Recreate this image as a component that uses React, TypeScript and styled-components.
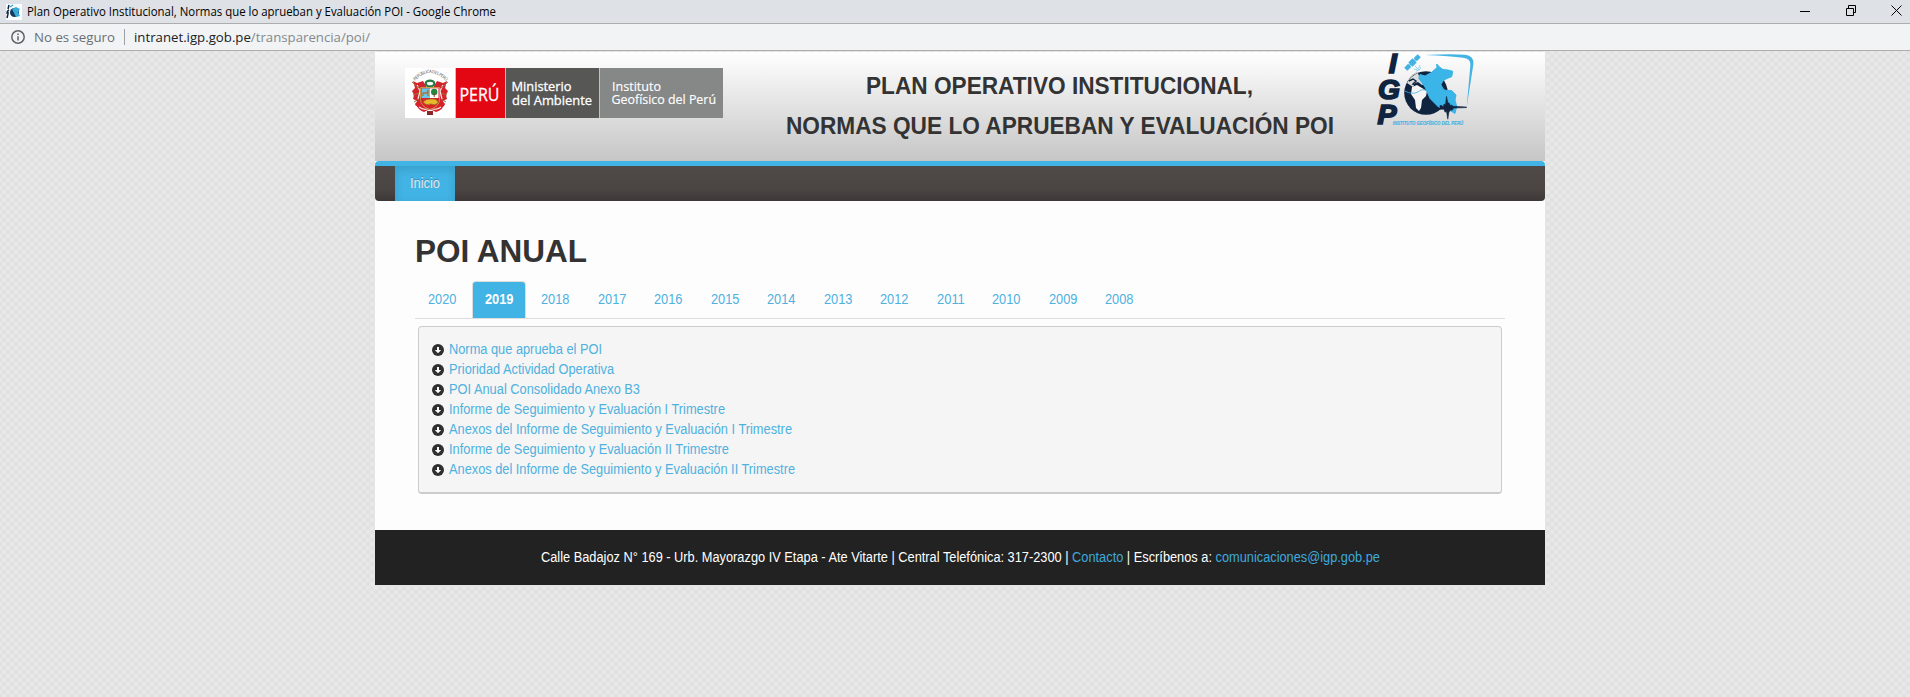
import React from 'react';
import styled, { createGlobalStyle } from 'styled-components';

const Global = createGlobalStyle`
  * { box-sizing: border-box; }
  body {
    margin: 0;
    min-height: 100vh;
    font: 14px/20px "Liberation Sans", Arial, sans-serif;
    color: #333;
    background-color: #e8e8e8;
    background-image:
      linear-gradient(45deg, rgba(0,0,0,.018) 0 8%, transparent 8% 42%, rgba(0,0,0,.018) 42% 58%, transparent 58% 92%, rgba(0,0,0,.018) 92%),
      linear-gradient(-45deg, rgba(0,0,0,.018) 0 8%, transparent 8% 42%, rgba(0,0,0,.018) 42% 58%, transparent 58% 92%, rgba(0,0,0,.018) 92%);
    background-size: 8px 8px;
  }
`;

const TitleBar = styled.div`
  height: 24px;
  display: flex;
  align-items: center;
  background: #dee1e6;
  border-bottom: 1px solid #adadae;
  padding: 0 8px 0 6px;
  font: 12px/16px "Open Sans", sans-serif;
  color: #000;
`;
const Favicon = styled.svg`
  width: 16px;
  height: 16px;
  margin-right: 5px;
`;
const WindowTitle = styled.span`
  flex: 1;
`;
const Controls = styled.div`
  display: flex;
  gap: 35px;
  padding-bottom: 3px;
  svg { display: block; width: 11px; height: 11px; fill: none; stroke: #000; }
`;
const AddressBar = styled.div`
  height: 27px;
  display: flex;
  align-items: center;
  background: #f1f3f4;
  border-bottom: 1px solid #adadae;
  padding-left: 11px;
  font: 13.5px/18px "Open Sans", sans-serif;
`;
const Security = styled.div`
  display: flex;
  width: 114px;
  height: 16px;
  align-items: center;
  border-right: 1px solid #9aa0a6;
  gap: 9px;
`;
const Url = styled.div`
  padding-left: 9px;
`;
const Container = styled.div`
  width: 1170px;
  margin: 1px 0 0 375px;
  background: #fefdfe;
`;
const Header = styled.header`
  height: 109px;
  display: flex;
  align-items: flex-start;
  background: linear-gradient(#fff, #c6c6c6);
`;
const Ministry = styled.div`
  display: flex;
  width: 318px;
  height: 50px;
  margin: 16px 0 0 30px;
  background: #fff;
`;
const Emblem = styled.svg`
  width: 50px;
  height: 50px;
`;
const Plate = styled.div<{ $w: number; $bg: string }>`
  width: ${p => p.$w}px;
  background: ${p => p.$bg};
  border-left: 1px solid #c9c3b5;
  svg { display: block; overflow: visible; }
`;
const Heading = styled.h1`
  flex: 1;
  display: flex;
  flex-direction: column;
  align-items: center;
  margin: 14px 0 0 20px;
  font-size: 24px;
  line-height: 40px;
  color: #333;
`;
const InstituteLogo = styled.svg`
  width: 100px;
  height: 78px;
  margin-right: 69px;
  overflow: visible;
`;
const Nav = styled.nav`
  height: 40px;
  display: flex;
  padding-left: 20px;
  border-top: 5px solid #41b3e4;
  border-radius: 4px;
  background: linear-gradient(#4f4a48, #4b4644 65%, #3d3837);
`;
const NavItem = styled.a`
  display: flex;
  justify-content: center;
  width: 60px;
  height: 35px;
  padding-top: 8px;
  color: #e5e8ee;
  background: #41b3e4;
  box-shadow: inset 0 3px 8px rgba(0,0,0,.125);
  text-shadow: 0 -1px 0 rgba(0,0,0,.25);
`;
const Main = styled.main`
  height: 329px;
  padding: 30px 40px 0;
`;
const PageTitle = styled.h2`
  margin: 0 0 10px;
  font-size: 31.5px;
  line-height: 40px;
`;
const Tabs = styled.div`
  display: flex;
  height: 38px;
  gap: 2px;
  border-bottom: 1px solid #ddd;
`;
const Tab = styled.a<{ $active?: boolean }>`
  height: 37px;
  padding: 8px 12px;
  border: 1px solid ${p => (p.$active ? '#ddd' : 'transparent')};
  border-bottom: 0;
  border-radius: 4px 4px 0 0;
  background: ${p => (p.$active ? '#41b3e4' : 'transparent')};
  color: ${p => (p.$active ? '#fff' : '#4eb1df')};
  font-weight: ${p => (p.$active ? 700 : 400)};
`;
const Well = styled.ul`
  margin: 7px 3px 0;
  padding: 12px 13px 15px;
  height: 168px;
  list-style: none;
  background: #f5f5f5;
  border: 1px solid #ccc;
  border-bottom-width: 2px;
  border-radius: 4px;
`;
const Item = styled.li`
  display: flex;
  align-items: center;
  gap: 5px;
  height: 20px;
  color: #4eb1df;
`;
const ItemIcon = styled.svg`
  display: block;
  margin-top: 2px;
`;
const Footer = styled.footer`
  height: 55px;
  background: #222;
  color: #fff;
  padding-left: 166px;
`;
const Line = styled.svg`
  display: block;
  overflow: visible;
`;

const HUMANIST = '"Open Sans", sans-serif';
const SANS = '"Liberation Sans", Arial, sans-serif';

type LineProps = { w: number; h: number; y: number; children: React.ReactNode };
const FittedLine = ({ w, h, y, children }: LineProps) => (
  <Line width={w} height={h}>
    <text y={y} textLength={w} lengthAdjust="spacingAndGlyphs" fill="currentColor">{children}</text>
  </Line>
);

const years = [2020, 2019, 2018, 2017, 2016, 2015, 2014, 2013, 2012, 2011, 2010, 2009, 2008];
const documents: [string, number][] = [
  ['Norma que aprueba el POI', 153],
  ['Prioridad Actividad Operativa', 165],
  ['POI Anual Consolidado Anexo B3', 191],
  ['Informe de Seguimiento y Evaluación I Trimestre', 276],
  ['Anexos del Informe de Seguimiento y Evaluación I Trimestre', 343],
  ['Informe de Seguimiento y Evaluación II Trimestre', 280],
  ['Anexos del Informe de Seguimiento y Evaluación II Trimestre', 346],
];

const DownloadIcon = () => (
  <ItemIcon width="12" height="12" viewBox="0 0 12 12">
    <circle cx="6" cy="6" r="6" fill="#2f2f2f" />
    <path d="M5 3h2v3h2.2L6 9.3 2.8 6H5z" fill="#fff" />
  </ItemIcon>
);

const CoatOfArms = () => (
  <Emblem viewBox="0 0 50 50">
    <path id="motto" d="M10 13Q25 -3 41 13" fill="none" />
    <text fontSize="4.4" fontFamily={HUMANIST} fill="#555"><textPath href="#motto" textLength="36">REPÚBLICA DEL PERÚ</textPath></text>
    <path d="M8 13l4 2 6-2 3 5v20l-4 3-7-4 2-4-4-2 1-4-2-4 3-3z" fill="#d4232c" />
    <path d="M42 13l-4 2-6-2-3 5v20l4 3 7-4-2-4 4-2-1-4 2-4-3-3z" fill="#d4232c" />
    <path d="M12 17l3 6-2 8M38 17l-3 6 2 8" stroke="#f7dedb" strokeWidth="1.3" fill="none" />
    <path d="M7 14l7 6M43 14l-7 6M8 27l6-2M42 27l-6-2M9 34l5-3M41 34l-5-3" stroke="#94733c" strokeWidth="1" />
    <path d="M10 35q3 7 9 9l6-3 6 3q7-2 9-9l-7 3H17z" fill="#d4232c" />
    <path d="M14 39q5 4 11 1 6 3 11-1" stroke="#f4dada" strokeWidth="1.2" fill="none" />
    <path d="M22 43h6v4h-6z" fill="#8c2524" />
    <ellipse cx="25" cy="15.5" rx="4.3" ry="2.9" fill="#fff" stroke="#267a42" strokeWidth="2.2" />
    <path d="M15.5 19.5h19v12q0 7-9.5 10-9.5-3-9.5-10z" fill="#d8232a" stroke="#c9a04a" strokeWidth=".9" />
    <path d="M16.5 20.3H25V30h-8.5z" fill="#6cc5e6" />
    <path d="M25 20.3h8.5V30H25z" fill="#fff" />
    <path d="M18 28v-3h4l1-3v6" stroke="#a7773e" strokeWidth="1.3" fill="none" />
    <circle cx="29.2" cy="24" r="3.2" fill="#258542" />
    <path d="M29.2 25v4" stroke="#765029" />
    <path d="M18 34q3-3.5 9-3 6 0 6 4-3 3-7 1-5 2-8-2z" fill="#e8b92d" stroke="#8d671b" strokeWidth=".6" />
  </Emblem>
);

const IgpLogo = () => (
  <InstituteLogo viewBox="0 0 100 78">
    <g fill="#10233f" stroke="#10233f" strokeWidth="1.7" fontFamily={SANS} fontWeight="700" fontStyle="italic" fontSize="28">
      <text x="12.8" y="21.2" textLength="8" lengthAdjust="spacingAndGlyphs">I</text>
      <text x="2" y="46.7" textLength="22" lengthAdjust="spacingAndGlyphs">G</text>
      <text x="1.5" y="72" textLength="19" lengthAdjust="spacingAndGlyphs">P</text>
    </g>
    <circle cx="50" cy="41" r="21.8" fill="#10233f" />
    <path d="M31 31q4-7 11-10l2 6 5 5-3 1-4-3-3 1-2 4-3-2z" fill="#dcdcdc" />
    <path d="M33 29l4-2 3 2-3 3 4 1" fill="none" stroke="#10233f" strokeWidth="1.5" />
    <path d="M36 35l5-2 5 3 5 3-1 5-4 4-1 8-2 3-3-3-1-8-4-6z" fill="#f4f4f4" />
    <path d="M29 39q7 4 13 1 4-4 9-1" fill="none" stroke="#41b3e4" strokeWidth=".8" />
    <path d="M60.7 12L64 15.500 67 17.500 72 18 76.700 19.300 75.700 24.700 71 26.500 67.300 28.500 65 32.500 66.500 36 69 38.300 75.700 38.500 80 43 79 48 80.700 54.500 79 61.500 74 58.500 62.500 55 54 46.500 49 35 42.700 26.300 44 22.500 49 24 55.700 20.300 61 15.500z" fill="#3bb4e8" stroke="#3bb4e8" strokeWidth="1" strokeLinejoin="round" />
    <path d="M49 3Q76 1.800 89 2.800q9.500.8 8.300 10L90.700 55l3.700-42q.6-6.500-7.400-7.300Q75 4 49 3z" fill="#41b3e4" />
    <path d="M64 53.500h2v1h1.500l.5-2.500 1.500 1 1-8.500 1.300 6 1.700 1 .5 2 2-.5.5 1.300 14 .7v.6l-13 .4-1 2-2.500.2-1.200 2.500-1 6.500-1.300-8-1.500 1-1-3H64z" fill="#10233f" stroke="#10233f" strokeWidth=".6" />
    <g fill="#41b3e4" transform="rotate(-45 36.500 10.500)">
      <path d="M33.500 7.500h6v6h-6zM27 8.300h5.500v4.400H27zM40.500 8.300H46v4.400h-5.500z" />
      <path d="M28 9.800h17v1.400H28z" />
    </g>
    <path d="M38 17q4 2 6-4M40 19q4 0 5-4M39 14l4 4" fill="none" stroke="#7ccbed" strokeWidth=".8" />
    <path d="M33 27q2-4 8-7" fill="none" stroke="#999" strokeWidth=".5" />
    <text x="16.7" y="72.500" fontFamily={SANS} fontWeight="700" fontStyle="italic" fontSize="5.3" textLength="70.5" lengthAdjust="spacingAndGlyphs" fill="#41b3e4" stroke="#41b3e4" strokeWidth=".15">INSTITUTO GEOFÍSICO DEL PERÚ</text>
  </InstituteLogo>
);

export default function App() {
  return (
    <>
      <Global />
      <TitleBar>
        <Favicon viewBox="0 0 16 16">
          <path d="M0 0h16v16H0z" fill="#fafcfd" />
          <path d="M3 1L2 5M3 6q-2 1-2 3h2M2 10l-1 4" stroke="#10233f" strokeWidth="1.5" fill="none" />
          <circle cx="8.5" cy="8.5" r="4.5" fill="#17395a" />
          <path d="M6 5l4-2 4 2-2 3 2 4-4 1z" fill="#35abd9" />
          <path d="M4 3l3-2" stroke="#35abd9" strokeWidth="1.5" />
        </Favicon>
        <WindowTitle><FittedLine w={469} h={18} y={12.5}>Plan Operativo Institucional, Normas que lo aprueban y Evaluación POI - Google Chrome</FittedLine></WindowTitle>
        <Controls>
          <svg viewBox="0 0 11 11"><path d="M1 6.5h10" /></svg>
          <svg viewBox="0 0 11 11"><path d="M1.500 3.500h7v7h-7zM3.500 3V.5h7v7H9" /></svg>
          <svg viewBox="0 0 11 11"><path d="M.5.5l10 10M10.500.5l-10 10" /></svg>
        </Controls>
      </TitleBar>
      <AddressBar>
        <Security>
          <Line width="14" height="14" viewBox="0 0 14 14" fill="none" stroke="#5f6368" strokeWidth="1.5">
            <circle cx="7" cy="7" r="6.2" /><path d="M7 6.200v4.300M7 3.500v1.500" />
          </Line>
          <FittedLine w={81} h={20} y={15}><tspan fill="#6b6f74">No es seguro</tspan></FittedLine>
        </Security>
        <Url><FittedLine w={236} h={20} y={15}><tspan fill="#202124">intranet.igp.gob.pe</tspan><tspan fill="#85898e">/transparencia/poi/</tspan></FittedLine></Url>
      </AddressBar>
      <Container>
        <Header>
          <Ministry>
            <CoatOfArms />
            <Plate $w={50} $bg="#e30613">
              <svg width="49" height="50"><text x="3.5" y="33" fontFamily={HUMANIST} fontSize="17.5" textLength="40" lengthAdjust="spacingAndGlyphs" fill="#fff" stroke="#fff" strokeWidth=".3">PERÚ</text></svg>
            </Plate>
            <Plate $w={94} $bg="#575756">
              <svg width="93" height="50" fontFamily={HUMANIST} fontSize="13.5" fill="#fff" stroke="#fff" strokeWidth=".3">
                <text x="5.5" y="23" textLength="60" lengthAdjust="spacingAndGlyphs">Ministerio</text>
                <text x="6" y="36.5" textLength="80" lengthAdjust="spacingAndGlyphs">del Ambiente</text>
              </svg>
            </Plate>
            <Plate $w={124} $bg="#868787">
              <svg width="123" height="50" fontFamily={HUMANIST} fontSize="13.5" fill="#fff" stroke="#fff" strokeWidth=".15">
                <text x="12" y="22.5" textLength="49" lengthAdjust="spacingAndGlyphs">Instituto</text>
                <text x="11.5" y="36" textLength="104.5" lengthAdjust="spacingAndGlyphs">Geofísico del Perú</text>
              </svg>
            </Plate>
          </Ministry>
          <Heading>
            <FittedLine w={387} h={40} y={28}>PLAN OPERATIVO INSTITUCIONAL,</FittedLine>
            <FittedLine w={548} h={40} y={28}>NORMAS QUE LO APRUEBAN Y EVALUACIÓN POI</FittedLine>
          </Heading>
          <IgpLogo />
        </Header>
        <Nav><NavItem><FittedLine w={30} h={20} y={14}>Inicio</FittedLine></NavItem></Nav>
        <Main>
          <PageTitle>POI ANUAL</PageTitle>
          <Tabs>
            {years.map(year => (
              <Tab key={year} $active={year === 2019}>
                <FittedLine w={year === 2011 ? 27.8 : 28.5} h={20} y={14}>{year}</FittedLine>
              </Tab>
            ))}
          </Tabs>
          <Well>
            {documents.map(([label, width]) => (
              <Item key={label}><DownloadIcon /><FittedLine w={width} h={20} y={15}>{label}</FittedLine></Item>
            ))}
          </Well>
        </Main>
        <Footer>
          <FittedLine w={839} h={55} y={32}>
            Calle Badajoz N° 169 - Urb. Mayorazgo IV Etapa - Ate Vitarte | Central Telefónica: 317-2300 | <tspan fill="#3fa9dc">Contacto</tspan> | Escríbenos a: <tspan fill="#3fa9dc">comunicaciones@igp.gob.pe</tspan>
          </FittedLine>
        </Footer>
      </Container>
    </>
  );
}
